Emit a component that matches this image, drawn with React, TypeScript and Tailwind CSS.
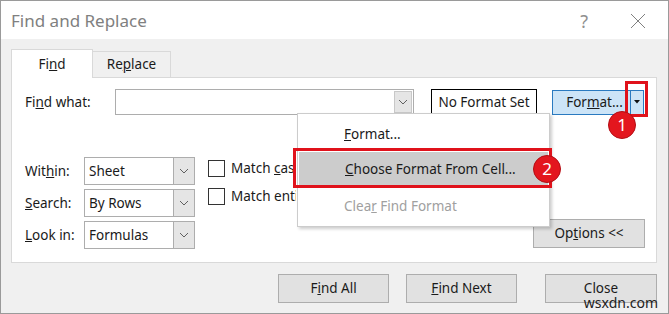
import React from "react";

const Chevron = () => (
  <svg width="10" height="6" viewBox="0 0 10 6" fill="none">
    <polyline points="1,1 5,5 9,1" stroke="#606060" strokeWidth="1" />
  </svg>
);

function Combo({ value, width }: { value: string; width: string }) {
  return (
    <div className={`${width} h-[28px] flex bg-white border border-[#adadad]`}>
      <div className="flex-1 flex items-center pl-[4px]">{value}</div>
      <div className="w-[21px] flex items-center justify-center bg-[#e5e5e5] border-l border-[#adadad]">
        <Chevron />
      </div>
    </div>
  );
}

function Check({ children }: { children: React.ReactNode }) {
  return (
    <div className="flex items-center h-[28px] gap-[6px] whitespace-nowrap">
      <div className="shrink-0 w-[17px] h-[17px] bg-white border border-[#333]" />
      <span>{children}</span>
    </div>
  );
}

function Btn({ children, className = "" }: { children: React.ReactNode; className?: string }) {
  return (
    <div
      className={`h-[29px] flex items-center justify-center bg-[#e1e1e1] border border-[#adadad] ${className}`}
    >
      <span>{children}</span>
    </div>
  );
}

function Badge({ n, className }: { n: string; className: string }) {
  return (
    <div
      className={`absolute w-[28px] h-[28px] rounded-full bg-[#e3161e] border border-[#b30e14] text-white text-[17px] flex items-center justify-center ${className}`}
    >
      {n}
    </div>
  );
}

export default function App() {
  return (
    <div
      className="relative w-[669px] h-[314px] overflow-hidden border border-[#9a9a9a] bg-[#f0f0f0] text-[13.5px] text-[#1a1a1a]"
      style={{ fontFamily: '"Noto Sans", "Open Sans", sans-serif' }}
    >
      {/* title bar */}
      <div className="h-[38px] bg-white flex items-center pl-[10px] pr-[22px] pt-[2px]">
        <span className="text-[17px] text-[#808080]">Find and Replace</span>
        <span className="ml-auto text-[18px] text-[#909090] mr-[42px]">?</span>
        <svg width="16" height="16" viewBox="0 0 16 16">
          <path d="M1 1 L15 15 M15 1 L1 15" stroke="#808080" strokeWidth="1" />
        </svg>
      </div>

      <div className="pl-[10px] pr-[11px]">
        {/* tabs */}
        <div className="flex items-end h-[38px] pt-[9px]">
          <div className="relative z-10 w-[82px] h-[29px] -mb-px bg-white border border-b-0 border-[#d9d9d9] flex items-center justify-center">
            <span>
              Fi<span className="underline">n</span>d
            </span>
          </div>
          <div className="w-[78px] h-[26px] border border-l-0 border-b-0 border-[#d9d9d9] flex items-center justify-center">
            <span>
              Re<span className="underline">p</span>lace
            </span>
          </div>
        </div>

        {/* panel */}
        <div className="h-[186px] bg-white border border-[#d9d9d9] pl-[13px] pr-[11px] pt-[11px]">
          <div className="flex items-center">
            <div className="w-[90px]">
              Fi<span className="underline">n</span>d what:
            </div>
            <div className="w-[299px] h-[26px] flex bg-white border border-[#adadad]">
              <div className="flex-1" />
              <div className="w-[18px] my-[1px] mr-[1px] flex items-center justify-center bg-[#e5e5e5] border border-[#c8c8c8]">
                <Chevron />
              </div>
            </div>
            <div className="ml-[17px] w-[106px] h-[26px] border border-black flex items-center justify-center">
              No Format Set
            </div>
            <div className="ml-[15px] w-[92px] h-[25px] flex bg-[#cce4f7] border border-[#2a7ac0]">
              <div className="flex-1 flex items-center justify-center pl-[6px]">
                <span>
                  For<span className="underline">m</span>at...
                </span>
              </div>
              <div className="w-[13px] flex items-center justify-center border-l border-[#2a7ac0]">
                <svg width="6" height="4" viewBox="0 0 6 4">
                  <polygon points="0,0 6,0 3,3.5" fill="#111" />
                </svg>
              </div>
            </div>
          </div>

          <div className="flex mt-[42px]">
            <div className="flex flex-col gap-[4px]">
              <div className="flex items-center">
                <div className="w-[59px]">
                  Wit<span className="underline">h</span>in:
                </div>
                <Combo value="Sheet" width="w-[111px]" />
              </div>
              <div className="flex items-center">
                <div className="w-[59px]">
                  <span className="underline">S</span>earch:
                </div>
                <Combo value="By Rows" width="w-[111px]" />
              </div>
              <div className="flex items-center">
                <div className="w-[59px]">
                  <span className="underline">L</span>ook in:
                </div>
                <Combo value="Formulas" width="w-[111px]" />
              </div>
            </div>
            {/* the open menu covers the rest of these labels */}
            <div className="ml-[13px] -mt-[3px] w-[88px] overflow-hidden">
              <Check>
                Match <span className="underline">c</span>ase
              </Check>
              <Check>
                Match entire cell c<span className="underline">o</span>ntents
              </Check>
            </div>
            <Btn className="ml-auto self-end mb-[1px] w-[112px] h-[28px]">
              Op<span className="underline">t</span>ions &lt;&lt;
            </Btn>
          </div>
        </div>

        {/* bottom buttons */}
        <div className="flex justify-end mt-[11px]">
          <Btn className="w-[111px]">
            F<span className="underline">i</span>nd All
          </Btn>
          <Btn className="w-[111px] ml-[17px]">
            <span className="underline">F</span>ind Next
          </Btn>
          <Btn className="w-[112px] ml-[28px]">Close</Btn>
        </div>
      </div>

      {/* dropdown menu */}
      <div className="absolute left-[296px] top-[112px] w-[253px] h-[114px] bg-white border border-[#cccccc] shadow-[2px_2px_3px_rgba(0,0,0,0.2)] pt-[2px]">
        <div className="h-[36px] flex items-center pl-[46px]">
          <span>
            <span className="underline">F</span>ormat...
          </span>
        </div>
        <div className="h-[35px] flex items-center pl-[46px] mx-[1px] bg-[#cccccc]">
          <span>
            <span className="underline">C</span>hoose Format From Cell...
          </span>
        </div>
        <div className="h-[38px] flex items-center pl-[46px] text-[#a0a0a0]">
          <span>
            Clea<span className="underline">r</span> Find Format
          </span>
        </div>
      </div>

      {/* annotations */}
      <div className="absolute left-[292px] top-[147px] w-[259px] h-[40px] border-[3px] border-[#e0121b]" />
      <div className="absolute left-[624px] top-[80px] w-[23px] h-[36px] border-[3px] border-[#e0121b]" />
      <Badge n="1" className="left-[607px] top-[110px]" />
      <Badge n="2" className="left-[532px] top-[154px]" />

      <div className="absolute right-[10px] bottom-[3px] text-[14px] text-[#222] leading-none">wsxdn.com</div>
    </div>
  );
}
